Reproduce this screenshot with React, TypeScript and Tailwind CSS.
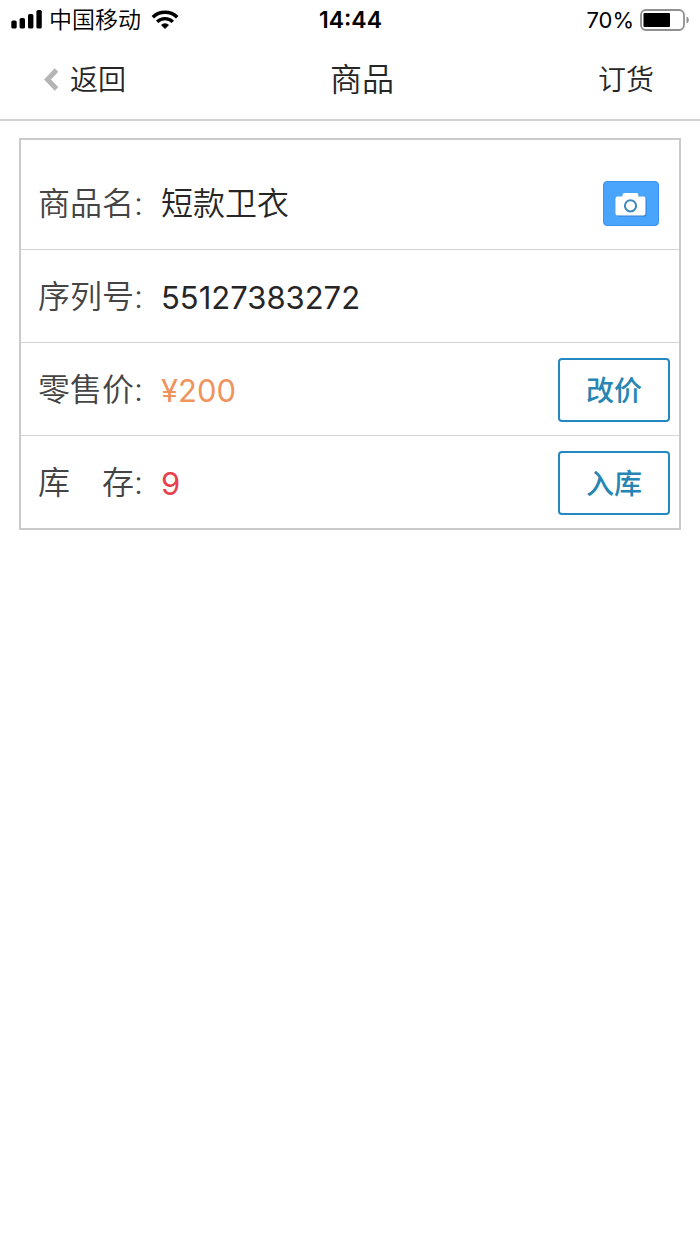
import React from 'react';

interface RowProps {
  label: string;
  value: string;
  valueClass: string;
  className: string;
  children?: React.ReactNode;
}

const SignalIcon = () => (
  <svg width="32" height="20" viewBox="0 0 32 20" fill="#000" aria-hidden="true">
    <rect x="0.3" y="10.500" width="5.400" height="8" rx="1.600" />
    <rect x="8.600" y="8" width="5.400" height="10.500" rx="1.600" />
    <rect x="17" y="4" width="5.400" height="14.500" rx="1.600" />
    <rect x="25.400" y="0" width="5.400" height="18.500" rx="1.600" />
  </svg>
);

const WifiIcon = () => (
  <svg width="28" height="20" viewBox="0 0 28 20" fill="none" stroke="#000" aria-hidden="true">
    <path d="M1.8 7.2a17.5 17.5 0 0 1 24.4 0" strokeWidth="3.6" />
    <path d="M6.2 11.9a11 11 0 0 1 15.6 0" strokeWidth="3.4" />
    <path d="M14 19l-4-4.1a5.8 5.8 0 0 1 8 0z" fill="#000" stroke="none" />
  </svg>
);

const BatteryIcon = () => (
  <svg width="50" height="22" viewBox="0 0 50 22" aria-hidden="true">
    <rect x="1" y="1" width="43" height="20" rx="5" fill="none" stroke="#8f8f8f" strokeWidth="1.8" />
    <rect x="3.500" y="4" width="26.500" height="14" rx="1" fill="#000" />
    <path d="M46.500 7.500c1.400.5 2.300 1.800 2.300 3.500s-.9 3-2.300 3.500z" fill="#8f8f8f" />
  </svg>
);

const BackIcon = () => (
  <svg width="15" height="24" viewBox="0 0 15 24" fill="none" aria-hidden="true">
    <path d="M12.500 2L3.500 11.500l9 9.500" stroke="#b5b5b5" strokeWidth="5" />
  </svg>
);

const CameraIcon = () => (
  <svg width="34" height="26" viewBox="0 0 34 26" aria-hidden="true">
    <path
      d="M3.500 5.500h5V4a2 2 0 0 1 2-2h12a2 2 0 0 1 2 2v1.500h5a2 2 0 0 1 2 2v15a2 2 0 0 1-2 2h-26a2 2 0 0 1-2-2v-15a2 2 0 0 1 2-2z"
      fill="#2f7fcc"
      transform="translate(1 1)"
    />
    <path
      d="M3.500 5.500h5V4a2 2 0 0 1 2-2h12a2 2 0 0 1 2 2v1.500h5a2 2 0 0 1 2 2v15a2 2 0 0 1-2 2h-26a2 2 0 0 1-2-2v-15a2 2 0 0 1 2-2z"
      fill="#fff"
    />
    <circle cx="16.500" cy="14.800" r="5.600" fill="none" stroke="#3b88bd" strokeWidth="2" />
  </svg>
);

const Row = ({ label, value, valueClass, className, children }: RowProps) => (
  <div className={`flex items-center pl-[17px] ${className}`}>
    <dt className="w-[123px] shrink-0 text-[32px] font-[350] text-[#444]">{label}</dt>
    <dd className={`flex-1 ${valueClass}`}>{value}</dd>
    {children}
  </div>
);

const OutlineButton = ({ children }: { children: React.ReactNode }) => (
  <button
    type="button"
    className="h-16 w-28 rounded-[4px] border-2 border-[#2488c0] bg-white pt-[2px] text-[28px] font-medium text-[#2785b3]"
  >
    {children}
  </button>
);

export default function App() {
  return (
    <div className="min-h-screen bg-white font-['Inter','Noto_Sans_CJK_SC',sans-serif] leading-none">
      <div className="grid h-10 grid-cols-[1fr_auto_1fr] items-center pl-[11px] pr-[10px] text-[23px] text-black">
        <div className="flex items-center">
          <SignalIcon />
          <span className="ml-[6px] mr-[10px] font-[350]">中国移动</span>
          <WifiIcon />
        </div>
        <span className="font-semibold">14:44</span>
        <div className="flex items-center justify-end gap-[6px]">
          <span className="text-[22px]">70%</span>
          <BatteryIcon />
        </div>
      </div>

      <header className="flex h-[81px] items-center justify-between border-b-2 border-[#d2d2d2] pl-[44px] pr-[46px] text-[#262626]">
        <button type="button" className="flex items-center gap-[11px] text-[28px] font-[350]">
          <BackIcon />
          返回
        </button>
        <h1 className="text-[32px] font-[350]">商品</h1>
        <button type="button" className="text-[28px] font-[350]">订货</button>
      </header>

      <main className="px-[19px] pt-[17px]">
        <dl className="divide-y divide-[#d4d4d4] border-2 border-[#cacaca]">
          <Row
            label="商品名:"
            value="短款卫衣"
            valueClass="text-[32px] font-[350] text-[#262626]"
            className="h-[110px] pt-[18px] pr-5"
          >
            <button
              type="button"
              aria-label="拍照"
              className="flex h-[45px] w-14 items-center justify-center rounded-[4px] border border-[#3d92ee] bg-[#49a5fc]"
            >
              <CameraIcon />
            </button>
          </Row>
          <Row
            label="序列号:"
            value="55127383272"
            valueClass="text-[31px] text-[#262626]"
            className="h-[93px] pt-[2px] pr-[9px]"
          />
          <Row
            label="零售价:"
            value="¥200"
            valueClass="text-[31px] text-[#ee945c]"
            className="h-[93px] pt-[2px] pr-[9px]"
          >
            <OutlineButton>改价</OutlineButton>
          </Row>
          <Row
            label="库　存:"
            value="9"
            valueClass="text-[31px] text-[#e8404a]"
            className="h-[92px] pt-[2px] pr-[9px]"
          >
            <OutlineButton>入库</OutlineButton>
          </Row>
        </dl>
      </main>
    </div>
  );
}
